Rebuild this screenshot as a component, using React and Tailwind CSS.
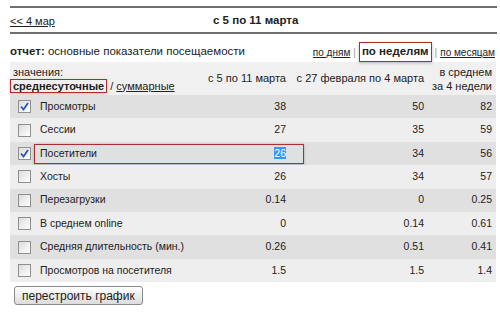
import React from 'react';

const rows = [
  { name: 'Просмотры', a: '38', b: '50', c: '82', checked: true },
  { name: 'Сессии', a: '27', b: '35', c: '59' },
  { name: 'Посетители', a: '26', b: '34', c: '56', checked: true, marked: true },
  { name: 'Хосты', a: '26', b: '34', c: '57' },
  { name: 'Перезагрузки', a: '0.14', b: '0', c: '0.25' },
  { name: 'В среднем online', a: '0', b: '0.14', c: '0.61' },
  { name: 'Средняя длительность (мин.)', a: '0.26', b: '0.51', c: '0.41' },
  { name: 'Просмотров на посетителя', a: '1.5', b: '1.5', c: '1.4' },
];

function Box({ checked }) {
  return (
    <span className="w-[13px] h-[13px] border border-[#8f8f8f] bg-gradient-to-br from-[#dcdcdc] to-white flex items-center justify-center">
      {checked && (
        <svg width="9" height="9" viewBox="0 0 9 9">
          <path d="M1 4.5 L3.5 7.5 L8 1" fill="none" stroke="#2b56b8" strokeWidth="1.8" />
        </svg>
      )}
    </span>
  );
}

export default function App() {
  return (
    <div className="w-[500px] h-[315px] bg-white text-[#222] font-['Liberation_Sans',Arial,sans-serif] overflow-hidden">
      <div className="ml-[10px] mr-[3px] pt-[6px]">
        {/* week switcher */}
        <div className="border-t-2 border-b-2 border-[#6e6e6e] h-[28px] flex items-center relative pt-[2px]">
          <a href="#" className="text-[11px] underline text-[#222]">&lt;&lt; 4 мар</a>
          <span className="absolute left-[203px] text-[11.5px] font-bold">с 5 по 11 марта</span>
        </div>

        {/* report title */}
        <div className="flex items-end justify-between h-[28px]">
          <div className="text-[11.5px] pb-[2px]">
            <b>отчет:</b> основные показатели посещаемости
          </div>
          <div className="flex items-center text-[10px] mr-[2px]">
            <a href="#" className="underline text-[#222]">по дням</a>
            <span className="text-[#999] mx-[3px]">|</span>
            <span className="border border-[#b02a2a] shadow-[0_1px_3px_rgba(0,0,0,0.25)] px-[2px] h-[20px] flex items-center text-[11.5px] font-bold">по неделям</span>
            <span className="text-[#999] mx-[3px]">|</span>
            <a href="#" className="underline text-[#222]">по месяцам</a>
          </div>
        </div>

        {/* table */}
        <div className="w-[486px] text-[10.5px]">
          <div className="grid grid-cols-[195px_85px_138px_68px] bg-[#f0f0f0] h-[33px] items-center whitespace-nowrap text-[11px]">
            <div className="pl-[3px] leading-[14px]">
              <div>значения:</div>
              <div className="ml-[-3px]">
                <span className="border border-[#b02a2a] px-[2px] font-bold text-[11px] shadow-[0_1px_3px_rgba(0,0,0,0.2)]">среднесуточные</span>
                <span> / </span>
                <a href="#" className="underline text-[#222]">суммарные</a>
              </div>
            </div>
            <div className="text-right pr-[4px]">с 5 по 11 марта</div>
            <div className="text-right pr-[4px]">с 27 февраля по 4 марта</div>
            <div className="text-right pr-[4px] leading-[14px]">
              <div>в среднем</div>
              <div>за 4 недели</div>
            </div>
          </div>

          {rows.map((r, i) => (
            <div
              key={r.name}
              className={`relative grid grid-cols-[195px_85px_138px_68px] h-[23.4px] items-center ${i % 2 === 0 ? 'bg-[#e0e0e0]' : 'bg-[#eeeeee]'}`}
            >
              {r.marked && (
                <div className="absolute left-[24px] w-[270px] top-[2px] bottom-[1px] border border-[#a83030] shadow-[0_1px_3px_rgba(0,0,0,0.25)]" />
              )}
              <div className="flex items-center pl-[8px] gap-[9px]">
                <Box checked={r.checked} />
                <span>{r.name}</span>
              </div>
              <div className="text-right pr-[4px]">
                {r.marked ? <span className="bg-[#3399ff] text-white">{r.a}</span> : r.a}
              </div>
              <div className="text-right pr-[4px]">{r.b}</div>
              <div className="text-right pr-[4px]">{r.c}</div>
            </div>
          ))}
        </div>

        <button className="mt-[4px] ml-[4px] h-[19px] px-[7px] border border-[#8a8a8a] rounded-[3px] bg-gradient-to-b from-white to-[#dcdcdc] text-[12px] leading-none text-[#222]">
          перестроить график
        </button>
      </div>
    </div>
  );
}
